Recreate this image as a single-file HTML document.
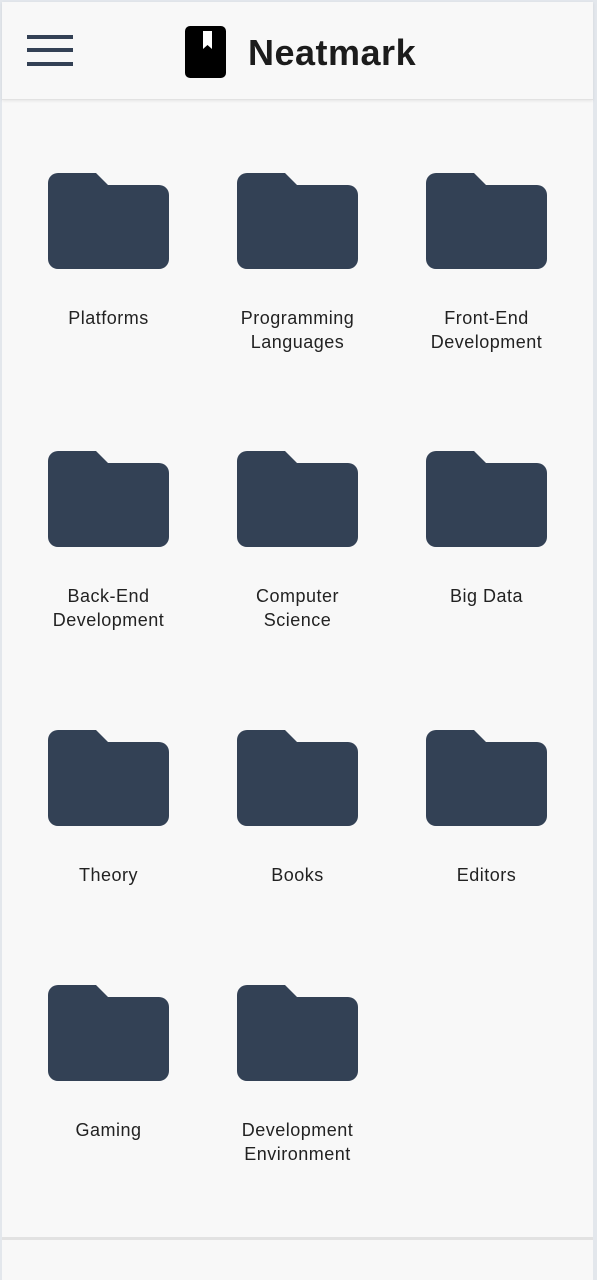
<!DOCTYPE html>
<html><head><style>
html,body{margin:0;padding:0;}
body{width:597px;height:1280px;position:relative;background:#e3e7ec;font-family:"Liberation Sans",sans-serif;overflow:hidden;}
.page{position:absolute;left:2px;top:2px;width:591px;height:1278px;background:#f8f8f8;}
.hdr{position:absolute;left:0;top:0;width:591px;height:97px;background:#f8f8f8;border-bottom:1px solid #e2e2e2;box-shadow:0 1px 3px rgba(0,0,0,0.08);}
.bar{position:absolute;left:25px;width:46px;height:4px;background:#334155;}
.title{position:absolute;left:246px;top:30px;font-size:36px;font-weight:bold;color:#1c1c1c;letter-spacing:0.5px;}
.item{position:absolute;width:189px;text-align:center;}
.item svg{display:block;margin:0 auto;}
.lbl{margin-top:37px;font-size:18px;line-height:24px;color:#222;letter-spacing:0.5px;}
.foot{position:absolute;left:0;top:1235px;width:591px;height:3px;background:#e2e2e2;}
</style></head><body>
<div class="page">
<div class="hdr">
<div class="bar" style="top:33px"></div>
<div class="bar" style="top:46px"></div>
<div class="bar" style="top:60px"></div>
<svg style="position:absolute;left:183px;top:24px" width="41" height="52" viewBox="0 0 41 52"><rect x="0" y="0" width="41" height="52" rx="5" fill="#000"/><path d="M18 5 H27 V23 L22.5 19 L18 23 Z" fill="#fff"/></svg>
<div class="title">Neatmark</div>
</div>

<div class="item" style="left:12px;top:171px"><svg width="121" height="96" viewBox="0 0 121 96"><path d="M10 0 H48 L60 12 H111 A10 10 0 0 1 121 22 V86 A10 10 0 0 1 111 96 H10 A10 10 0 0 1 0 86 V10 A10 10 0 0 1 10 0 Z" fill="#334155"/></svg><div class="lbl">Platforms</div></div>
<div class="item" style="left:201px;top:171px"><svg width="121" height="96" viewBox="0 0 121 96"><path d="M10 0 H48 L60 12 H111 A10 10 0 0 1 121 22 V86 A10 10 0 0 1 111 96 H10 A10 10 0 0 1 0 86 V10 A10 10 0 0 1 10 0 Z" fill="#334155"/></svg><div class="lbl">Programming<br>Languages</div></div>
<div class="item" style="left:390px;top:171px"><svg width="121" height="96" viewBox="0 0 121 96"><path d="M10 0 H48 L60 12 H111 A10 10 0 0 1 121 22 V86 A10 10 0 0 1 111 96 H10 A10 10 0 0 1 0 86 V10 A10 10 0 0 1 10 0 Z" fill="#334155"/></svg><div class="lbl">Front-End<br>Development</div></div>

<div class="item" style="left:12px;top:449px"><svg width="121" height="96" viewBox="0 0 121 96"><path d="M10 0 H48 L60 12 H111 A10 10 0 0 1 121 22 V86 A10 10 0 0 1 111 96 H10 A10 10 0 0 1 0 86 V10 A10 10 0 0 1 10 0 Z" fill="#334155"/></svg><div class="lbl">Back-End<br>Development</div></div>
<div class="item" style="left:201px;top:449px"><svg width="121" height="96" viewBox="0 0 121 96"><path d="M10 0 H48 L60 12 H111 A10 10 0 0 1 121 22 V86 A10 10 0 0 1 111 96 H10 A10 10 0 0 1 0 86 V10 A10 10 0 0 1 10 0 Z" fill="#334155"/></svg><div class="lbl">Computer<br>Science</div></div>
<div class="item" style="left:390px;top:449px"><svg width="121" height="96" viewBox="0 0 121 96"><path d="M10 0 H48 L60 12 H111 A10 10 0 0 1 121 22 V86 A10 10 0 0 1 111 96 H10 A10 10 0 0 1 0 86 V10 A10 10 0 0 1 10 0 Z" fill="#334155"/></svg><div class="lbl">Big Data</div></div>

<div class="item" style="left:12px;top:728px"><svg width="121" height="96" viewBox="0 0 121 96"><path d="M10 0 H48 L60 12 H111 A10 10 0 0 1 121 22 V86 A10 10 0 0 1 111 96 H10 A10 10 0 0 1 0 86 V10 A10 10 0 0 1 10 0 Z" fill="#334155"/></svg><div class="lbl">Theory</div></div>
<div class="item" style="left:201px;top:728px"><svg width="121" height="96" viewBox="0 0 121 96"><path d="M10 0 H48 L60 12 H111 A10 10 0 0 1 121 22 V86 A10 10 0 0 1 111 96 H10 A10 10 0 0 1 0 86 V10 A10 10 0 0 1 10 0 Z" fill="#334155"/></svg><div class="lbl">Books</div></div>
<div class="item" style="left:390px;top:728px"><svg width="121" height="96" viewBox="0 0 121 96"><path d="M10 0 H48 L60 12 H111 A10 10 0 0 1 121 22 V86 A10 10 0 0 1 111 96 H10 A10 10 0 0 1 0 86 V10 A10 10 0 0 1 10 0 Z" fill="#334155"/></svg><div class="lbl">Editors</div></div>

<div class="item" style="left:12px;top:983px"><svg width="121" height="96" viewBox="0 0 121 96"><path d="M10 0 H48 L60 12 H111 A10 10 0 0 1 121 22 V86 A10 10 0 0 1 111 96 H10 A10 10 0 0 1 0 86 V10 A10 10 0 0 1 10 0 Z" fill="#334155"/></svg><div class="lbl">Gaming</div></div>
<div class="item" style="left:201px;top:983px"><svg width="121" height="96" viewBox="0 0 121 96"><path d="M10 0 H48 L60 12 H111 A10 10 0 0 1 121 22 V86 A10 10 0 0 1 111 96 H10 A10 10 0 0 1 0 86 V10 A10 10 0 0 1 10 0 Z" fill="#334155"/></svg><div class="lbl">Development<br>Environment</div></div>

<div class="foot"></div>
</div>
</body></html>
